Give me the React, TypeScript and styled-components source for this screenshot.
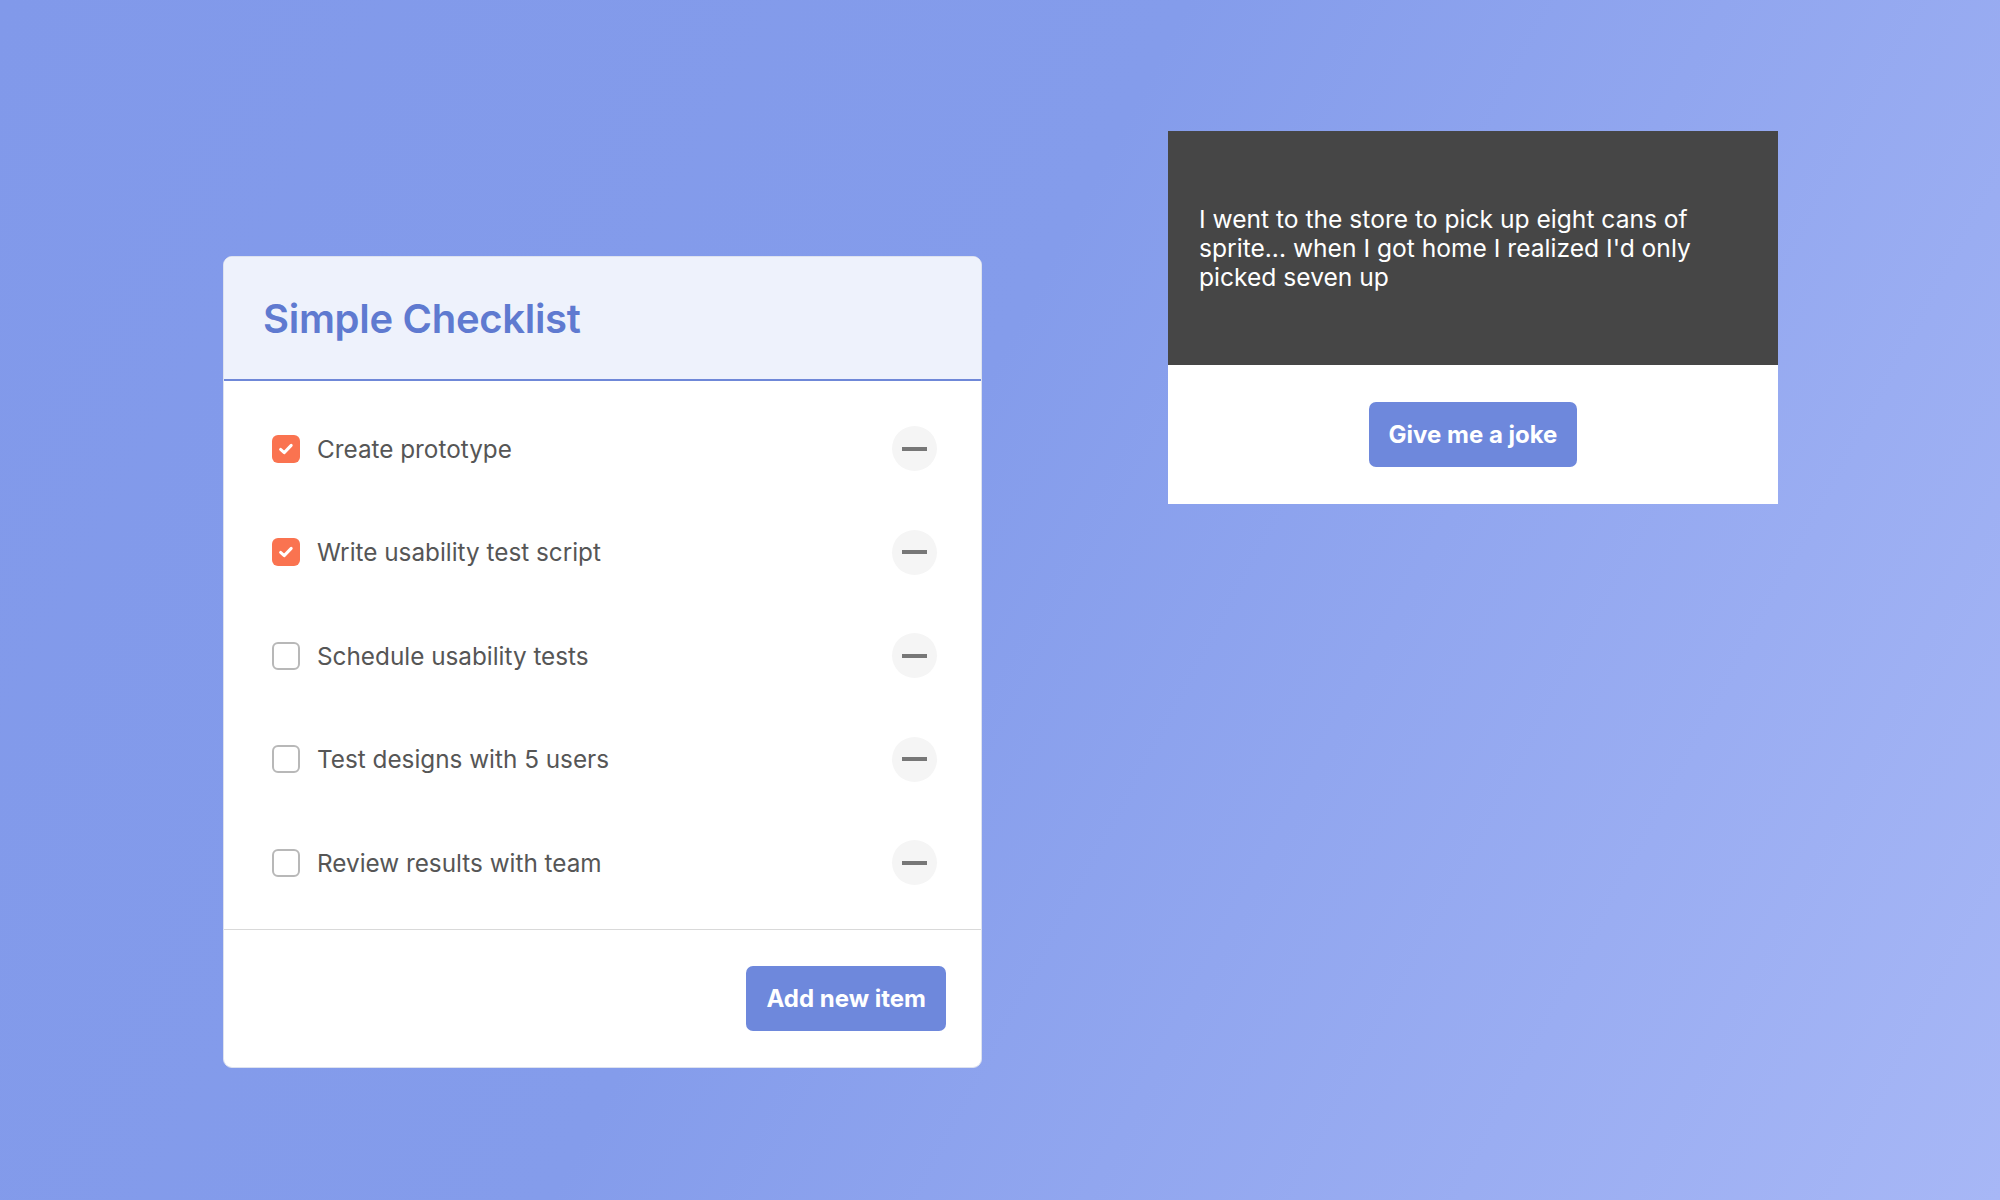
import styled, { createGlobalStyle } from "styled-components";

const GlobalStyle = createGlobalStyle`
  html, body {
    margin: 0;
    padding: 0;
  }
  body {
    font-family: Inter, "Noto Sans", sans-serif;
  }
`;

const items = [
  { label: "Create prototype", done: true },
  { label: "Write usability test script", done: true },
  { label: "Schedule usability tests", done: false },
  { label: "Test designs with 5 users", done: false },
  { label: "Review results with team", done: false },
];

const App = () => {
  return (
    <>
      <GlobalStyle />
      <Page>
        <ChecklistCard>
          <Header>
            <Title>Simple Checklist</Title>
          </Header>
          <List>
            {items.map((item) => (
              <Row key={item.label}>
                <Box $checked={item.done}>
                  {item.done && (
                    <svg width="18" height="18" viewBox="0 0 18 18">
                      <path
                        d="M3.6 9.4 L7.2 12.6 L14.2 5.4"
                        fill="none"
                        stroke="#fff"
                        strokeWidth="3"
                        strokeLinecap="round"
                        strokeLinejoin="round"
                      />
                    </svg>
                  )}
                </Box>
                <Label>{item.label}</Label>
                <RemoveButton aria-label="remove">
                  <Dash />
                </RemoveButton>
              </Row>
            ))}
          </List>
          <Footer>
            <PrimaryButton>Add new item</PrimaryButton>
          </Footer>
        </ChecklistCard>

        <JokeCard>
          <JokeBody>
            <JokeText>
              I went to the store to pick up eight cans of sprite... when I got
              home I realized I'd only picked seven up
            </JokeText>
          </JokeBody>
          <JokeActions>
            <PrimaryButton>Give me a joke</PrimaryButton>
          </JokeActions>
        </JokeCard>
      </Page>
    </>
  );
};

const Page = styled.main`
  width: 2000px;
  height: 1200px;
  box-sizing: border-box;
  padding: 131px 0 0 223px;
  display: flex;
  align-items: flex-start;
  gap: 186px;
  background: linear-gradient(118deg, #8199ea 0%, #849ceb 45%, #a7b7f6 100%);
`;

const ChecklistCard = styled.section`
  margin-top: 125px;
  width: 759px;
  background: #fff;
  border: 1px solid #dde2ef;
  border-radius: 9px;
  overflow: hidden;
  box-sizing: border-box;
`;

const Header = styled.div`
  height: 124px;
  box-sizing: border-box;
  display: flex;
  align-items: center;
  padding: 0 39px;
  background: #eef2fc;
  border-bottom: 2px solid #6f88d8;
`;

const Title = styled.h1`
  margin: 0;
  font-size: 40px;
  font-weight: 600;
  color: #5f7ad0;
  letter-spacing: -0.3px;
`;

const List = styled.ul`
  list-style: none;
  margin: 0;
  padding: 16px 0 14px;
`;

const Row = styled.li`
  height: 103.5px;
  display: flex;
  align-items: center;
  padding: 0 44px 0 48px;
`;

const Box = styled.span<{ $checked: boolean }>`
  width: 28px;
  height: 28px;
  box-sizing: border-box;
  border-radius: 6px;
  display: flex;
  align-items: center;
  justify-content: center;
  flex-shrink: 0;
  background: ${(p) => (p.$checked ? "#fa7350" : "#fff")};
  border: ${(p) => (p.$checked ? "none" : "2px solid #b8b8b8")};
`;

const Label = styled.span`
  flex: 1;
  margin-left: 17px;
  font-size: 24.3px;
  color: #565656;
`;

const RemoveButton = styled.button`
  width: 45px;
  height: 45px;
  border-radius: 50%;
  border: none;
  padding: 0;
  background: #f5f5f5;
  display: flex;
  align-items: center;
  justify-content: center;
  cursor: pointer;
`;

const Dash = styled.span`
  width: 25px;
  height: 4px;
  background: #777;
`;

const Footer = styled.div`
  border-top: 1px solid #d9d9d9;
  padding: 36px 35px 36px;
  display: flex;
  justify-content: flex-end;
`;

const PrimaryButton = styled.button`
  height: 65px;
  padding: 0 20px;
  border: none;
  border-radius: 7px;
  background: #6e88dc;
  color: #fff;
  font-family: Inter, "Noto Sans", sans-serif;
  font-size: 24px;
  font-weight: 700;
  cursor: pointer;
`;

const JokeCard = styled.section`
  width: 610px;
  background: #fff;
`;

const JokeBody = styled.div`
  height: 234px;
  box-sizing: border-box;
  display: flex;
  align-items: center;
  padding: 0 30px 0 31px;
  background: #464646;
`;

const JokeText = styled.p`
  margin: 0;
  max-width: 545px;
  color: #fff;
  font-size: 24.6px;
  line-height: 29px;
`;

const JokeActions = styled.div`
  padding: 37px 0;
  display: flex;
  justify-content: center;
`;

export default App;
